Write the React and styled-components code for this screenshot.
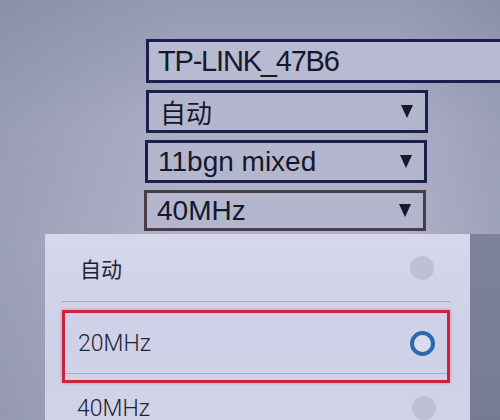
import React from "react";
import styled, { createGlobalStyle } from "styled-components";

const Global = createGlobalStyle`
  html, body { margin: 0; padding: 0; }
  body { background: #9a9db5; }
`;

const Page = styled.div`
  position: relative;
  width: 500px;
  height: 420px;
  overflow: hidden;
  background:
    linear-gradient(90deg, rgba(120,124,150,0.35) 0%, rgba(0,0,0,0) 35%, rgba(0,0,0,0) 80%, rgba(110,114,140,0.25) 100%),
    linear-gradient(180deg, #9699b3 0%, #aaadc4 30%, #afb2c8 60%, #a4a7be 100%);
  display: flex;
  flex-direction: column;
  font-family: "Liberation Sans", Arial, "Noto Sans CJK SC", sans-serif;
`;

const Form = styled.div`
  display: flex;
  flex-direction: column;
  gap: 7px;
  padding: 39px 0 0 146px;
`;

const TextField = styled.div`
  height: 38px;
  border: 3px solid #1b1f4e;
  border-right: none;
  background: #b7bad1;
  display: flex;
  align-items: center;
  padding-left: 9px;
  font-size: 29px;
  letter-spacing: -1.2px;
  color: #15182a;
`;

const Select = styled.div`
  box-sizing: border-box;
  width: 282px;
  height: ${(p) => p.$h || 43}px;
  margin-left: ${(p) => p.$shift || 0}px;
  border: 3px solid ${(p) => (p.$focused ? "#4c3c46" : "#1b1f4e")};
  background: #b3b6cd;
  display: flex;
  align-items: center;
  justify-content: space-between;
  padding: 0 12px 0 ${(p) => (p.$cjk ? 11 : 10)}px;
  font-size: ${(p) => (p.$cjk ? 26 : 28)}px;
  font-family: ${(p) =>
    p.$cjk
      ? `"Noto Sans CJK SC", sans-serif`
      : `"Liberation Sans", Arial, sans-serif`};
  font-weight: 400;
  color: #15182a;
`;

const Caret = styled.span`
  width: 0;
  height: 0;
  border-left: 6px solid transparent;
  border-right: 6px solid transparent;
  border-top: 13px solid #161a2e;
`;

const Stage = styled.div`
  flex: 1;
  display: flex;
  margin-top: 3px;
`;

const Sheet = styled.div`
  margin-left: 45px;
  width: 425px;
  background: linear-gradient(180deg, #d5d8eb 0%, #ced1e7 50%, #d0d3e8 100%);
  display: flex;
  flex-direction: column;
  padding: 0 20px 0 17px;
  box-sizing: border-box;
  color: #1f2232;
`;

const Shade = styled.div`
  flex: 1;
  background: linear-gradient(180deg, #7d8199 0%, #767a93 100%);
`;

const Option = styled.div`
  display: flex;
  align-items: center;
  justify-content: space-between;
  height: ${(p) => p.$h}px;
  padding: 0 ${(p) => p.$pr || 16}px 0 ${(p) => p.$pl || 18}px;
  border-bottom: ${(p) => (p.$divider ? "1px solid #a9acc2" : "none")};
  font-size: ${(p) => (p.$cjk ? 21 : 23)}px;
  font-family: ${(p) =>
    p.$cjk ? `"Noto Sans CJK SC", sans-serif` : `"Roboto", sans-serif`};
  font-weight: ${(p) => (p.$cjk ? 400 : 300)};
`;

const Highlight = styled.div`
  margin-top: 8px;
  border: 3px solid #d0213c;
  box-shadow: 0 0 3px rgba(230, 60, 80, 0.5);
  padding-bottom: 6px;
`;

const Radio = styled.span`
  box-sizing: border-box;
  width: ${(p) => (p.$on ? 25 : 24)}px;
  height: ${(p) => (p.$on ? 25 : 24)}px;
  border-radius: 50%;
  background: ${(p) => (p.$on ? "#d9dcee" : "#bec1d5")};
  border: ${(p) => (p.$on ? "4.5px solid #2c68ad" : "none")};
`;

export default function App() {
  return (
    <>
      <Global />
      <Page>
        <Form>
          <TextField>TP-LINK_47B6</TextField>
          <Select $cjk>
            自动
            <Caret />
          </Select>
          <Select $shift={-1}>
            11bgn mixed
            <Caret />
          </Select>
          <Select $shift={-2} $h={41} $focused>
            40MHz
            <Caret />
          </Select>
        </Form>
        <Stage>
          <Sheet>
            <Option $h={67} $divider $cjk>
              自动
              <Radio />
            </Option>
            <Highlight>
              <Option $h={60} $divider $pl={13} $pr={12}>
                20MHz
                <Radio $on />
              </Option>
            </Highlight>
            <Option $h={50} $pl={15} $pr={14}>
              40MHz
              <Radio />
            </Option>
          </Sheet>
          <Shade />
        </Stage>
      </Page>
    </>
  );
}
